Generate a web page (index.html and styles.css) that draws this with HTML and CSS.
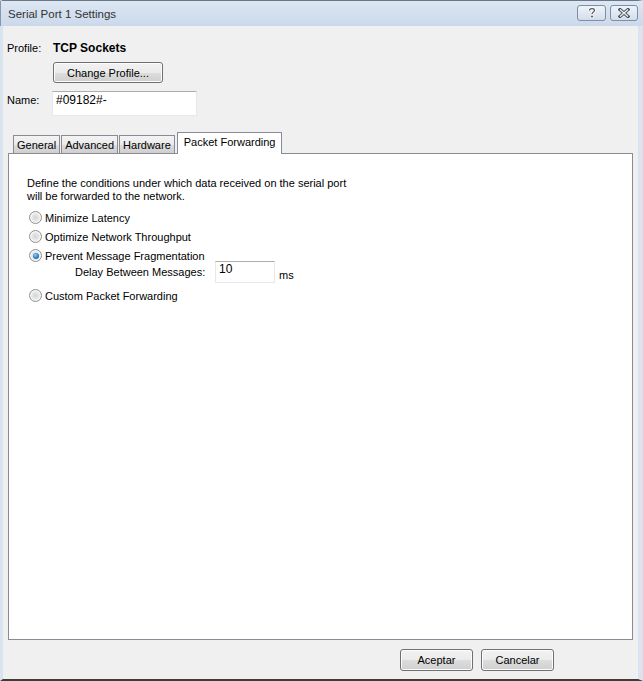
FILE: index.html
```html
<!DOCTYPE html>
<html lang="en">
<head>
    <meta charset="UTF-8">
    <title>Serial Port 1 Settings</title>
    <link rel="stylesheet" href="styles.css">
</head>
<body>

<div class="window">
    <!-- Title bar -->
    <div class="titlebar">
        <span class="title">Serial Port 1 Settings</span>
        <div class="caption-btns">
            <span class="caption-btn">
                <svg width="10" height="11" viewBox="0 0 10 11"><path d="M2.5 3.5 C2.5 1 7.5 1 7.5 3.5 C7.5 5.2 5 5 5 7" fill="none" stroke="#fff" stroke-width="3"/><path d="M2.5 3.5 C2.5 1 7.5 1 7.5 3.5 C7.5 5.2 5 5 5 7" fill="none" stroke="#4a5563" stroke-width="1.2"/><rect x="3.8" y="8.3" width="2.4" height="2.4" fill="#4a5563" stroke="#fff" stroke-width="0.6"/></svg>
            </span>
            <span class="caption-btn wide">
                <svg width="12" height="10" viewBox="0 0 12 10"><path d="M2 1.5 L10 8.5 M10 1.5 L2 8.5" stroke="#4a5563" stroke-width="3.2" stroke-linecap="square"/><path d="M2 1.5 L10 8.5 M10 1.5 L2 8.5" stroke="#f4f6f9" stroke-width="1.2"/></svg>
            </span>
        </div>
    </div>

    <div class="client">
        <div class="profile-row">
            <span class="label">Profile:</span>
            <span class="profile-name">TCP Sockets</span>
        </div>
        <button class="button change-btn">Change Profile...</button>

        <div class="name-row">
            <span class="label name-label">Name:</span>
            <input type="text" class="textbox name-box" value="#09182#-">
        </div>

        <!-- Tabs -->
        <div class="tabs">
            <span class="tab first">General</span>
            <span class="tab">Advanced</span>
            <span class="tab">Hardware</span>
            <span class="tab active">Packet Forwarding</span>
        </div>
        <div class="panel">
            <p class="intro">Define the conditions under which data received on the serial port<br>will be forwarded to the network.</p>

            <label class="radio-row"><span class="radio"></span>Minimize Latency</label>
            <label class="radio-row"><span class="radio"></span>Optimize Network Throughput</label>
            <label class="radio-row"><span class="radio checked"></span>Prevent Message Fragmentation</label>
            <div class="delay-row">
                <span class="delay-label">Delay Between Messages:</span>
                <input type="text" class="textbox delay-box" value="10">
                <span class="unit">ms</span>
            </div>
            <label class="radio-row"><span class="radio"></span>Custom Packet Forwarding</label>
        </div>

        <div class="footer">
            <button class="button dlg-btn">Aceptar</button>
            <button class="button dlg-btn">Cancelar</button>
        </div>
    </div>
</div>

</body>
</html>
```

FILE: styles.css
```css
/* Whole dialog */
body {
    margin: 0;
    font-family: "Liberation Sans", Arial, sans-serif;
    font-size: 11px;
    color: #000;
    background: #f0f0f0;
}

.window {
    width: 643px;
    height: 681px;
    box-sizing: border-box;
    display: flex;
    flex-direction: column;
    border-top: 1px solid #6b7784;
    border-left: 3px solid #dae4f1;
    border-right: 5px solid #dae4f1;
    border-bottom: 2px solid #3b3b3b;
    background: #f0f0f0;
}

/* Title bar */
.titlebar {
    height: 25px;
    margin-left: -3px;
    margin-right: -5px;
    padding: 0 5px 0 7px;
    display: flex;
    align-items: center;
    justify-content: space-between;
    background: linear-gradient(#dde7f4, #cbd9eb);
    border-left: 1px solid #8a96a4;
}

.title {
    font-size: 11.5px;
    color: #333;
}

.caption-btns {
    display: flex;
    gap: 4px;
    margin-top: -2px;
}

.caption-btn {
    width: 27px;
    height: 14px;
    border: 1px solid #7d8ea4;
    border-radius: 3px;
    background: linear-gradient(#eef3f9, #d4deea);
    display: flex;
    align-items: center;
    justify-content: center;
}

.caption-btn.wide {
    width: 26px;
}

/* Client area */
.client {
    flex: 1;
    padding: 15px 0 0 4px;
    display: flex;
    flex-direction: column;
}

.label {
    width: 46px;
    flex-shrink: 0;
}

.profile-row {
    display: flex;
    align-items: center;
    height: 13px;
}

.profile-name {
    font-weight: bold;
    font-size: 12px;
}

.button {
    font-family: inherit;
    font-size: 11px;
    color: #000;
    height: 21px;
    padding: 0;
    border: 1px solid #707070;
    border-radius: 3px;
    background: linear-gradient(#f2f2f2 0%, #ebebeb 50%, #dddddd 51%, #cfcfcf 100%);
    box-shadow: inset 0 0 0 1px #fcfcfc;
}

.change-btn {
    margin: 8px 0 0 46px;
    width: 110px;
}

.name-row {
    display: flex;
    align-items: flex-start;
    margin-top: 8px;
}

.name-label {
    margin-top: 3px;
}

.textbox {
    font-family: inherit;
    font-size: 12px;
    box-sizing: border-box;
    border: 1px solid #e3e9ef;
    border-top-color: #abadb3;
    background: #fff;
    padding: 0 0 8px 3px;
    outline: none;
}

.name-box {
    margin-left: -1px;
    width: 145px;
    height: 25px;
}

/* Tabs */
.tabs {
    display: flex;
    align-items: flex-end;
    height: 21px;
    margin: 16px 0 0 1px;
    position: relative;
    z-index: 1;
}

.tab {
    height: 18px;
    box-sizing: border-box;
    padding: 3px 3px 0 3px;
    border: 1px solid #898c95;
    border-bottom: none;
    background: linear-gradient(#f3f3f3 0%, #ebebeb 50%, #dddddd 51%, #cfcfcf 100%);
    line-height: 13px;
}

.tab + .tab {
    margin-left: 1px;
}

.tab.first {
    margin-left: 5px;
}

.tab.active {
    height: 22px;
    margin-bottom: -1px;
    margin-left: 2px;
    padding: 3px 6px 0 6px;
    background: #fff;
}

.panel {
    width: 625px;
    height: 487px;
    box-sizing: border-box;
    margin-left: 1px;
    border: 1px solid #898c95;
    background: #fff;
    padding: 23px 0 0 18px;
}

.intro {
    margin: 0 0 5px 0;
    line-height: 13px;
}

.radio-row {
    display: flex;
    align-items: center;
    height: 19px;
}

.radio {
    width: 11px;
    height: 11px;
    margin: 0 3px 0 2px;
    border: 1px solid #8e8f8f;
    border-radius: 50%;
    background: radial-gradient(circle at 50% 50%, #d4d4d4 0%, #ececec 55%, #f4f4f4 100%);
    box-shadow: inset 0 0 0 1px #f8f8f8;
    position: relative;
}

.radio.checked::after {
    content: "";
    position: absolute;
    left: 2.5px;
    top: 2.5px;
    width: 6px;
    height: 6px;
    border-radius: 50%;
    background: radial-gradient(circle at 40% 35%, #8fd0f5 0%, #2b7fc3 55%, #1b4f86 100%);
}

.delay-row {
    display: flex;
    align-items: center;
    height: 22px;
    margin: -4px 0 3px 48px;
}

.delay-label {
    width: 140px;
}

.delay-box {
    width: 60px;
    height: 22px;
    padding-bottom: 6px;
}

.unit {
    margin-left: 4px;
    margin-top: 6px;
}

/* Dialog buttons */
.footer {
    display: flex;
    justify-content: flex-end;
    gap: 8px;
    margin-top: 9px;
    padding-right: 84px;
}

.dlg-btn {
    width: 73px;
    height: 22px;
}
```
